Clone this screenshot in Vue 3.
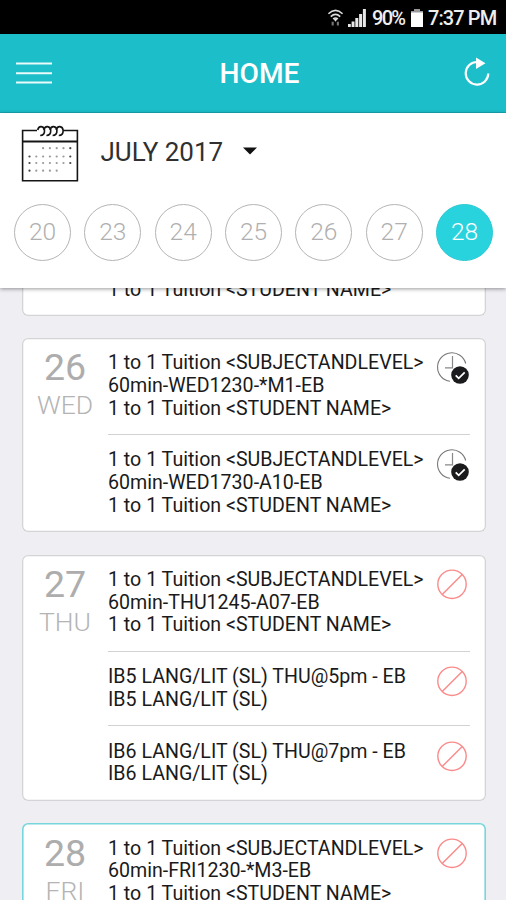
<script setup>
const days = [20, 23, 24, 25, 26, 27, 28]
const dotRows = [
  { y: 21.2, from: 2, to: 6 },
  { y: 29.5, from: 0, to: 6 },
  { y: 36, from: 0, to: 6 },
  { y: 43.7, from: 0, to: 5 },
]
const tuition = '1 to 1 Tuition <SUBJECTANDLEVEL>'
const student = '1 to 1 Tuition <STUDENT NAME>'
const cards = [
  {
    day: '26', name: 'WED', lessons: [
      { lines: [tuition, '60min-WED1230-*M1-EB', student], status: 'done' },
      { lines: [tuition, '60min-WED1730-A10-EB', student], status: 'done' },
    ],
  },
  {
    day: '27', name: 'THU', lessons: [
      { lines: [tuition, '60min-THU1245-A07-EB', student], status: 'off' },
      { lines: ['IB5 LANG/LIT (SL) THU@5pm - EB', 'IB5 LANG/LIT (SL)'], status: 'off' },
      { lines: ['IB6 LANG/LIT (SL) THU@7pm - EB', 'IB6 LANG/LIT (SL)'], status: 'off' },
    ],
  },
  { day: '28', name: 'FRI', today: true, lessons: [{ lines: [tuition, '60min-FRI1230-*M3-EB', student], status: 'off' }] },
]
</script>

<template>
  <div class="screen">
    <div class="status">
      <svg class="wifi" width="17" height="20" viewBox="0 0 18 20" fill="none" stroke="#ddd" stroke-width="1.7">
        <path d="M1.5 5.5Q9-1.5 16.500 5.500M4 8.500Q9 4 14 8.500M6.500 11Q9 9 11.500 11" />
        <path d="M9 14 6.500 10.500H11.500Z" fill="#ddd" stroke="none" />
        <path d="M6 14v4M11.500 14v4" stroke="#777" stroke-width="2.200" />
      </svg>
      <svg class="signal" width="18" height="18" viewBox="0 0 18 18" fill="#e8e8e8">
        <path d="M0 15h2.800v3H0zM3.600 12.500h2.900v5.500H3.600zM7.300 9h3v9h-3zM11.100 5h3v13h-3zM14.900 0h3v18h-3z" />
      </svg>
      <span class="percent">90%</span>
      <svg class="battery" width="12" height="18" viewBox="0 0 12 18">
        <path d="M3 0h6v2h3v2H0V2h3z" fill="#999" />
        <path d="M0 3.500h12V18H0z" fill="#fff" />
      </svg>
      <span class="time">7:37 PM</span>
    </div>

    <header class="bar">
      <svg width="36" height="24" viewBox="0 0 36 24" stroke="#e9fbfc" stroke-width="2">
        <path d="M0 2.500h36M0 12.300h36M0 21.500h36" />
      </svg>
      <h1>HOME</h1>
      <svg class="refresh" width="28" height="30" viewBox="0 0 28 30">
        <path d="M14.500 5A11.300 11.300 0 1 0 25.300 16.500" fill="none" stroke="#fff" stroke-width="2.200" />
        <path d="M13 .5 22.500 6.300 13 12z" fill="#fff" />
      </svg>
    </header>

    <section class="picker">
      <div class="month">
        <svg width="58" height="58" viewBox="0 0 58 58" fill="none" stroke="#151515">
          <path d="M16 5.500H1.600V55.700H56.400V5.500H42" stroke-width="1.600" />
          <path d="M1 16.500h56" stroke-width="2" />
          <path v-for="n in 4" :key="n" :transform="`translate(${n * 6.200 + 9.500} 0)`" d="M1 5C2 0 7.500.8 7.800 5.500 8 8.500 6.500 10.500 3.500 10.500" stroke-width="1.600" />
          <g v-for="row in dotRows" :key="row.y" stroke="none">
            <template v-for="n in 7" :key="n">
              <circle v-if="n - 1 >= row.from && n - 1 < row.to + (row.to === 6 ? 1 : 0)" :cx="1.700 + n * 6.800" :cy="row.y + 2" r="1.100" :fill="n === 7 || n === 1 ? '#444' : '#999'" />
            </template>
          </g>
        </svg>
        <span class="label">JULY 2017</span>
        <svg class="caret" width="14" height="8" viewBox="0 0 14 8"><path d="M0 .5h14L7 7.500z" fill="#111" /></svg>
      </div>
      <div class="days">
        <span v-for="d in days" :key="d" :class="['day', { active: d === 28 }]">{{ d }}</span>
      </div>
    </section>

    <main class="list">
      <article class="card partial">
        <div class="text">{{ student }}</div>
      </article>
      <article v-for="card in cards" :key="card.day" :class="['card', { today: card.today }]">
        <div class="date">
          <div class="num">{{ card.day }}</div>
          <div class="name">{{ card.name }}</div>
        </div>
        <div class="lessons">
          <div v-for="(lesson, i) in card.lessons" :key="i" class="lesson">
            <div class="text">
              <div v-for="line in lesson.lines" :key="line">{{ line }}</div>
            </div>
            <svg v-if="lesson.status === 'done'" width="34" height="34" viewBox="0 0 34 34" fill="none">
              <path d="M13 29.300A14.300 14.300 0 1 1 28.700 11.500" stroke="#777" stroke-width="1.100" />
              <path d="M15.500 4v12M8 15.800h8" stroke="#888" stroke-width="1.200" />
              <circle cx="23" cy="23" r="8.800" fill="#1b1b1d" />
              <path d="m18.700 23.300 3 3 6-6" stroke="#fff" stroke-width="1.800" />
            </svg>
            <svg v-else width="34" height="34" viewBox="0 0 34 34" fill="none" stroke="#fb8a8a" stroke-width="1.400">
              <circle cx="15" cy="15.300" r="14.200" />
              <path d="M5.200 25.500 25.200 5.500" />
            </svg>
          </div>
        </div>
      </article>
    </main>
  </div>
</template>

<style>
body { margin: 0; background: #efeef3; }
</style>

<style scoped>
.screen { width: 506px; height: 900px; overflow: hidden; background: #efeef3; font-family: Roboto, "Liberation Sans", sans-serif; display: flex; flex-direction: column; }
svg { display: block; flex: none; }
.status { flex: none; box-sizing: border-box; height: 34px; padding: 2px 10px 0 0; background: #000; color: #eee; display: flex; align-items: center; justify-content: flex-end; font-size: 20px; font-weight: 500; line-height: 32px; z-index: 2; }
.wifi { margin: 0 4px 0 0; }
.signal { margin: 0 6px 0 0; }
.percent { width: 34px; margin-right: 5px; letter-spacing: -1.700px; white-space: nowrap; }
.battery { margin-right: 5px; }
.time { width: 68px; letter-spacing: -.900px; white-space: nowrap; }
.bar { flex: none; box-sizing: border-box; height: 79px; padding: 0 15px 0 16px; background: #1bbec9; border-bottom: 1px solid #17a9b3; display: flex; align-items: center; justify-content: space-between; z-index: 2; }
.bar h1 { margin: 2px 0 0 4px; color: #fff; font-size: 28.200px; font-weight: 500; line-height: 34px; }
.refresh { margin-bottom: 2px; }
.picker { flex: none; height: 175px; background: #fff; box-shadow: 0 1px 4px rgba(0, 0, 0, .4); z-index: 2; }
.month { display: flex; align-items: center; height: 58px; padding: 12px 0 0 21px; }
.label { width: 122px; margin: 0 0 4px 21.500px; font-size: 26px; line-height: 30px; color: #303030; white-space: nowrap; }
.caret { margin: 0 0 7px 20px; }
.days { display: flex; justify-content: space-between; padding: 21px 13px 0 14px; }
.day { box-sizing: border-box; width: 57px; height: 57px; border: 1.500px solid #b5b5b5; border-radius: 50%; font-size: 24.500px; font-weight: 300; line-height: 53px; text-align: center; color: #b0b0b0; }
.day.active { background: #29d3de; border-color: #29c9d3; color: #fff; }
.list { flex: 1; min-height: 0; overflow: hidden; display: flex; flex-direction: column; gap: 22.500px; padding: 0 20.500px 0 22px; }
.card { flex: none; display: flex; border-radius: 6px; background: #fff; box-shadow: inset 0 0 0 1.300px #d4d4d6; }
.card.partial { margin-top: -10px; padding: 1px 0 14px 86px; height: 22.600px; }
.card.today { box-shadow: inset 0 0 0 1.600px #76d6dc; }
.date { width: 86px; flex: none; padding-top: 8.300px; text-align: center; }
.num { font-size: 37.500px; line-height: 42px; color: #adadad; }
.name { font-size: 26.500px; line-height: 34px; font-weight: 300; color: #b4b4b4; }
.lessons { flex: 1; margin-right: 15.500px; }
.lesson { display: flex; justify-content: space-between; box-sizing: border-box; padding: 14.300px 0 14px; border-bottom: 1px solid #d2d2d4; }
.lesson:last-child { border-bottom-color: transparent; }
.text { font-size: 19.600px; line-height: 22.600px; color: #1a1a1a; white-space: nowrap; }
.lesson svg { margin: 0 -.500px -10px 0; }
</style>
